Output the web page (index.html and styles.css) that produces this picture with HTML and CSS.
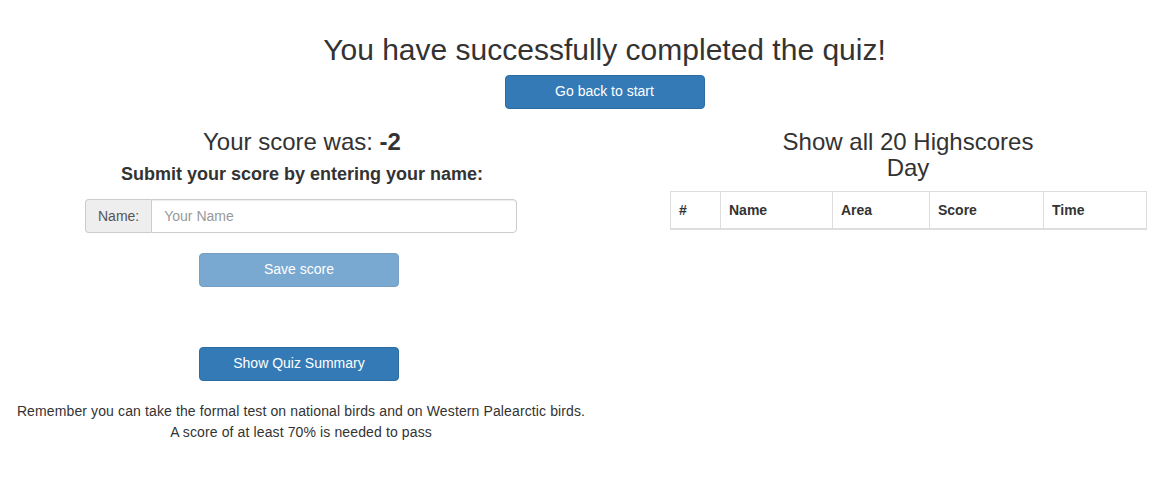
FILE: index.html
```html
<!DOCTYPE html>
<html lang="en">
<head>
<meta charset="utf-8">
<title>Quiz completed</title>
<link rel="stylesheet" href="styles.css">
</head>
<body>
<div class="page">
  <header class="top">
    <h2 class="title">You have successfully completed the quiz!</h2>
    <button class="btn btn-primary btn-wide" type="button">Go back to start</button>
  </header>
  <div class="columns">
    <section class="left">
      <h3 class="score">Your score was: <b>-2</b></h3>
      <h4 class="submit">Submit your score by entering your name:</h4>
      <div class="input-group">
        <span class="addon">Name:</span>
        <input class="field" type="text" placeholder="Your Name">
      </div>
      <button class="btn btn-primary btn-wide shifted disabled" type="button">Save score</button>
      <button class="btn btn-primary btn-wide shifted summary" type="button">Show Quiz Summary</button>
      <p class="note">Remember you can take the formal test on national birds and on Western Palearctic birds.<br>A score of at least 70% is needed to pass</p>
    </section>
    <section class="right">
      <h3 class="hs-title">Show all 20 Highscores<br>Day</h3>
      <table class="table">
        <thead>
          <tr>
            <th class="c-num">#</th>
            <th class="c-name">Name</th>
            <th class="c-area">Area</th>
            <th class="c-score">Score</th>
            <th class="c-time">Time</th>
          </tr>
        </thead>
        <tbody></tbody>
      </table>
    </section>
  </div>
</div>
</body>
</html>
```
FILE: styles.css
```css
* { box-sizing: border-box; }
html, body { margin: 0; padding: 0; background: #fff; }
body {
  font-family: "Liberation Sans", Arial, Helvetica, sans-serif;
  font-size: 14px;
  line-height: 1.42857;
  color: #333;
}
.page { width: 1166px; }
.top {
  padding-left: 43px;
  padding-top: 33px;
  display: flex;
  flex-direction: column;
  align-items: center;
}
.title {
  margin: 0 0 9px;
  font-size: 30px;
  font-weight: 400;
  line-height: 1.1;
}
.btn {
  display: inline-block;
  padding: 6px 12px;
  font-family: inherit;
  font-size: 14px;
  line-height: 1.42857;
  text-align: center;
  border: 1px solid transparent;
  border-radius: 4px;
  cursor: pointer;
}
.btn-primary { color: #fff; background: #337ab7; border-color: #2e6da4; }
.btn-wide { width: 200px; }
.btn.shifted { margin-left: -6px; }
.btn.disabled { opacity: .65; cursor: not-allowed; }
.columns {
  display: grid;
  grid-template-columns: 604px 1fr;
}
.left {
  display: flex;
  flex-direction: column;
  align-items: center;
}
.score {
  margin: 20px 0 10px;
  font-size: 24px;
  font-weight: 400;
  line-height: 1.1;
}
.score b { font-weight: 700; }
.submit {
  margin: 0 0 14px;
  font-size: 18px;
  font-weight: 700;
  line-height: 1.1;
}
.input-group {
  display: flex;
  width: 432px;
  margin-left: -2px;
}
.addon {
  padding: 6px 12px;
  font-size: 14px;
  line-height: 20px;
  color: #555;
  background: #eee;
  border: 1px solid #ccc;
  border-right: 0;
  border-radius: 4px 0 0 4px;
}
.field {
  flex: 1;
  height: 34px;
  padding: 6px 12px;
  font-family: inherit;
  font-size: 14px;
  color: #555;
  border: 1px solid #ccc;
  border-radius: 0 4px 4px 0;
  box-shadow: inset 0 1px 1px rgba(0,0,0,.075);
  outline: none;
}
.field::placeholder { color: #999; }
.input-group + .btn { margin-top: 20px; }
.summary { margin-top: 60px; }
.note {
  margin: 20px 0 0 -2px;
  text-align: center;
  line-height: 21px;
  letter-spacing: 0.12px;
}
.right { padding-left: 66px; }
.hs-title {
  width: 476px;
  margin: 20px 0 9px;
  text-align: center;
  font-size: 24px;
  font-weight: 400;
  line-height: 1.1;
}
.table {
  width: 476px;
  border-collapse: collapse;
  border: 1px solid #ddd;
  table-layout: fixed;
}
.table th {
  padding: 8px;
  text-align: left;
  font-weight: 700;
  line-height: 20px;
  border: 1px solid #ddd;
  border-bottom-width: 2px;
}
.c-num { width: 50px; }
.c-name { width: 112px; }
.c-area { width: 97px; }
.c-score { width: 114px; }
.c-time { width: 103px; }
```
